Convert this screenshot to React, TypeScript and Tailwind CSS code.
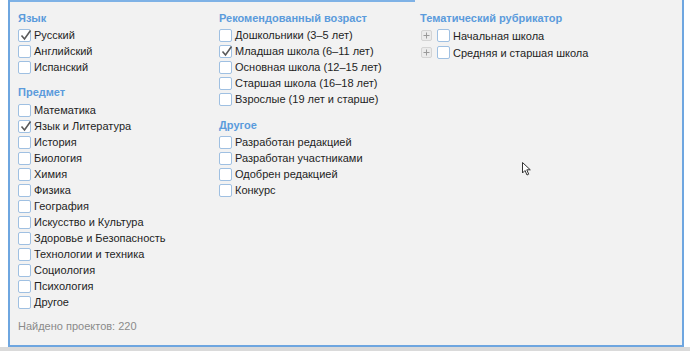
import React from "react"

const lang = [
  { label: "Русский", checked: true },
  { label: "Английский" },
  { label: "Испанский" },
]

const subjects = [
  { label: "Математика" },
  { label: "Язык и Литература", checked: true },
  { label: "История" },
  { label: "Биология" },
  { label: "Химия" },
  { label: "Физика" },
  { label: "География" },
  { label: "Искусство и Культура" },
  { label: "Здоровье и Безопасность" },
  { label: "Технологии и техника" },
  { label: "Социология" },
  { label: "Психология" },
  { label: "Другое" },
]

const ages = [
  { label: "Дошкольники (3–5 лет)" },
  { label: "Младшая школа (6–11 лет)", checked: true },
  { label: "Основная школа (12–15 лет)" },
  { label: "Старшая школа (16–18 лет)" },
  { label: "Взрослые (19 лет и старше)" },
]

const other = [
  { label: "Разработан редакцией" },
  { label: "Разработан участниками" },
  { label: "Одобрен редакцией" },
  { label: "Конкурс" },
]

type Item = { label: string; checked?: boolean }

const Box = ({ checked, className = "" }: { checked?: boolean; className?: string }) => (
  <span className={"relative block w-[13px] h-[13px] shrink-0 rounded-[2px] border border-[#9fc0e2] bg-white " + className}>
    {checked && (
      <svg className="absolute left-[1px] top-[-1px]" width="12" height="12" viewBox="0 0 12 12">
        <path d="M1.5 6.5 L4.5 10 L10.5 1.5" fill="none" stroke="#5a5a5a" strokeWidth="1.6" />
      </svg>
    )}
  </span>
)

const Row = ({ item }: { item: Item }) => (
  <div className="flex items-center h-4 gap-[3px]">
    <Box checked={item.checked} />
    <span className="whitespace-nowrap">{item.label}</span>
  </div>
)

const Heading = ({ children }: { children: React.ReactNode }) => (
  <div className="h-4 leading-4 font-bold text-[#5b9bdc] mb-[1px]">{children}</div>
)

const Plus = () => (
  <span className="flex items-center justify-center w-[11px] h-[11px] shrink-0 rounded-[2px] border border-[#d4d4d4] bg-[#ebebeb]">
    <svg width="7" height="7" viewBox="0 0 7 7">
      <path d="M3.5 0.5 V6.5 M0.5 3.5 H6.5" stroke="#999" strokeWidth="1" />
    </svg>
  </span>
)

export default function App() {
  return (
    <div className="w-[690px] h-[351px] bg-white flex flex-col text-[11px] leading-4 text-[#1e1e1e]" style={{ fontFamily: '"Liberation Sans", Arial, sans-serif' }}>
      <div className="relative ml-2 mr-[6px] h-[347px] shrink-0 border-x-2 border-b-2 border-[#6ea6e0] bg-[#f2f2f2]">
        <div className="w-[405px] h-[2px] bg-[#7fb2e6]" />
        <div className="flex pt-2 pl-2">
          <div className="w-[201px] flex flex-col">
            <Heading>Язык</Heading>
            {lang.map((i) => <Row key={i.label} item={i} />)}
            <div className="mt-[9px]" />
            <Heading>Предмет</Heading>
            <div className="mt-[1px]" />
            {subjects.map((i) => <Row key={i.label} item={i} />)}
            <div className="mt-[8px] text-[#8a8a8a] whitespace-nowrap">Найдено проектов: 220</div>
          </div>
          <div className="w-[201px] flex flex-col">
            <Heading>Рекомендованный возраст</Heading>
            {ages.map((i) => <Row key={i.label} item={i} />)}
            <div className="mt-[10px]" />
            <Heading>Другое</Heading>
            {other.map((i) => <Row key={i.label} item={i} />)}
          </div>
          <div className="flex flex-col">
            <Heading>Тематический рубрикатор</Heading>
            {["Начальная школа", "Средняя и старшая школа"].map((t) => (
              <div key={t} className="flex items-center h-[17px] pl-[1px]">
                <Plus />
                <Box className="ml-[5px]" />
                <span className="ml-[3px] whitespace-nowrap">{t}</span>
              </div>
            ))}
          </div>
        </div>
        <svg className="absolute left-[512px] top-[162px]" width="10" height="14" viewBox="0 0 10 14">
          <path d="M0.5 0.5 V11 L3 8.5 L5 13 L6.7 12.2 L4.8 7.8 L8.3 7.8 Z" fill="white" stroke="#333" strokeWidth="1" />
        </svg>
      </div>
      <div className="flex-1 bg-[#dadada]" />
    </div>
  )
}
